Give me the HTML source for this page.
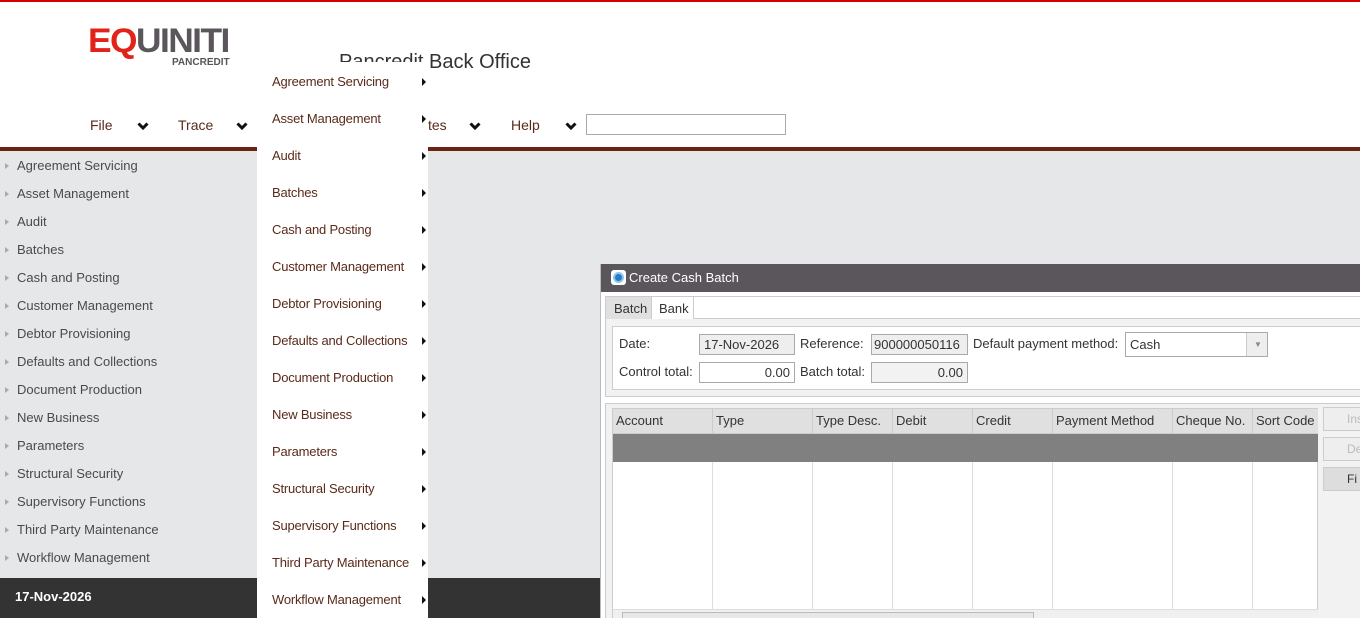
<!DOCTYPE html>
<html><head><style>
*{box-sizing:border-box;margin:0;padding:0}
html,body{width:1360px;height:618px;overflow:hidden}
body{position:relative;background:#e6e7e8;font-family:"Liberation Sans",sans-serif;font-size:13px}
.a{position:absolute}
#top{left:0;top:0;width:1360px;height:147px;background:#fff;border-top:2px solid #d40000}
#bar{left:0;top:147px;width:1360px;height:4px;background:#6b2412}
#side{left:0;top:151px;width:257px;height:427px;background:#e6e7e8}
#side div{position:absolute;left:17px;color:#4a4a4a;font-size:13px}
#side div:before{content:"";position:absolute;left:-12px;top:5px;border-left:4px solid #aaa;border-top:3px solid transparent;border-bottom:3px solid transparent}
#foot{left:0;top:578px;width:600px;height:40px;background:#333;color:#fff;font-weight:bold;padding:11px 15px;font-size:13px}
#menu{left:257px;top:62px;width:171px;height:556px;background:#fff}
#menu div{position:absolute;left:15px;color:#5a2a1a;font-size:13px;width:156px;letter-spacing:-0.2px}
#menu div:after{content:"";position:absolute;right:2px;top:4px;border-left:4px solid #111;border-top:4px solid transparent;border-bottom:4px solid transparent}
.nav{top:117px;color:#5a2a1a;font-size:14px}
.chev{top:122px}
#dlg{left:600px;top:264px;width:760px;height:354px;background:#fff;border-left:1px solid #bbb;overflow:hidden}
#tb{left:0;top:0;width:760px;height:28px;background:#5a565b;color:#fff;font-size:13px;padding:6px 0 0 28px}
.inp{position:absolute;height:21px;border:1px solid #aaa;font-size:13px;padding:2px 4px;color:#333}
.lbl{position:absolute;font-size:13px;color:#333}
.th{position:absolute;top:0;height:25px;border-right:1px solid #ccc;padding:4px 3px;color:#333;font-size:13px}
.col{position:absolute;top:53px;height:160px;border-right:1px solid #ddd}
.btn{position:absolute;left:722px;width:40px;height:24px;background:#eee;border:1px solid #ccc;color:#bbb;padding:4px 0 0 23px;font-size:12px}
</style></head><body>
<div class="a" id="top"></div>
<div class="a" style="left:88px;top:22px;font-size:34px;font-weight:bold;letter-spacing:-1.5px;color:#5a565b;transform:scaleX(1.04);transform-origin:left"><span style="color:#e2231a">EQ</span>UINITI</div>
<div class="a" style="left:172px;top:57px;font-size:10px;color:#555;font-weight:bold">PANCREDIT</div>
<div class="a" style="left:339px;top:51px;font-size:20px;color:#333">Pancredit Back Office</div>
<svg width="0" height="0" style="position:absolute"><defs><symbol id="cv" viewBox="0 0 12 8"><path d="M1.5 1.5 L6 6 L10.5 1.5" fill="none" stroke="#111" stroke-width="3"/></symbol></defs></svg>
<div class="a nav" style="left:90px">File</div><svg class="a chev" style="left:137px" width="12" height="8"><use href="#cv"/></svg>
<div class="a nav" style="left:178px">Trace</div><svg class="a chev" style="left:236px" width="12" height="8"><use href="#cv"/></svg>
<div class="a nav" style="left:428px">tes</div><svg class="a chev" style="left:469px" width="12" height="8"><use href="#cv"/></svg>
<div class="a nav" style="left:511px">Help</div><svg class="a chev" style="left:565px" width="12" height="8"><use href="#cv"/></svg>
<div class="a" style="left:586px;top:114px;width:200px;height:21px;border:1px solid #aaa;background:#fff"></div>
<div class="a" id="bar"></div>
<div class="a" id="side">
<div style="top:7px">Agreement Servicing</div><div style="top:35px">Asset Management</div><div style="top:63px">Audit</div><div style="top:91px">Batches</div><div style="top:119px">Cash and Posting</div><div style="top:147px">Customer Management</div><div style="top:175px">Debtor Provisioning</div><div style="top:203px">Defaults and Collections</div><div style="top:231px">Document Production</div><div style="top:259px">New Business</div><div style="top:287px">Parameters</div><div style="top:315px">Structural Security</div><div style="top:343px">Supervisory Functions</div><div style="top:371px">Third Party Maintenance</div><div style="top:399px">Workflow Management</div>
</div>
<div class="a" id="foot">17-Nov-2026</div>
<div class="a" id="menu">
<div style="top:12px">Agreement Servicing</div><div style="top:49px">Asset Management</div><div style="top:86px">Audit</div><div style="top:123px">Batches</div><div style="top:160px">Cash and Posting</div><div style="top:197px">Customer Management</div><div style="top:234px">Debtor Provisioning</div><div style="top:271px">Defaults and Collections</div><div style="top:308px">Document Production</div><div style="top:345px">New Business</div><div style="top:382px">Parameters</div><div style="top:419px">Structural Security</div><div style="top:456px">Supervisory Functions</div><div style="top:493px">Third Party Maintenance</div><div style="top:530px">Workflow Management</div>
</div>
<div class="a" id="dlg">
<div class="a" id="tb">Create Cash Batch</div>
<div class="a" style="left:10px;top:6px;width:15px;height:15px;border-radius:3px;background:#fff"><div class="a" style="left:2px;top:2px;width:11px;height:11px;border-radius:50%;background:#2a7cc0;border:2px solid #8fc6ee"></div></div>
<div class="a" style="left:4px;top:32px;width:760px;height:101px;border:1px solid #ccc;background:#f2f2f2"></div>
<div class="a" style="left:5px;top:33px;width:46px;height:22px;background:#e0e0e0;border-right:1px solid #ccc;padding:4px 0 0 8px;color:#333">Batch</div>
<div class="a" style="left:51px;top:33px;width:42px;height:22px;background:#fff;border-right:1px solid #ccc;padding:4px 0 0 7px;color:#333">Bank</div>
<div class="a" style="left:93px;top:33px;width:670px;height:22px;background:#fff;border-bottom:1px solid #ccc"></div>
<div class="a" style="left:11px;top:62px;width:760px;height:64px;border:1px solid #ccc;background:#fff"></div>
<span class="lbl" style="left:18px;top:72px">Date:</span>
<div class="inp" style="left:98px;top:70px;width:96px;background:#eee">17-Nov-2026</div>
<span class="lbl" style="left:199px;top:72px">Reference:</span>
<div class="inp" style="left:270px;top:70px;width:97px;background:#eee;padding:2px 2px">900000050116</div>
<span class="lbl" style="left:372px;top:72px">Default payment method:</span>
<div class="inp" style="left:524px;top:68px;width:143px;height:25px;padding-top:4px;background:#fff">Cash<span style="position:absolute;right:0;top:0;width:21px;height:23px;border-left:1px solid #ccc;background:#eee;font-size:8px;color:#888;padding:7px 0 0 7px">▼</span></div>
<span class="lbl" style="left:18px;top:100px">Control total:</span>
<div class="inp" style="left:98px;top:98px;width:96px;text-align:right;background:#fff">0.00</div>
<span class="lbl" style="left:199px;top:100px">Batch total:</span>
<div class="inp" style="left:270px;top:98px;width:97px;text-align:right;background:#f2f2f2">0.00</div>
<div class="a" style="left:4px;top:139px;width:760px;height:220px;border:1px solid #ccc;background:#f2f2f2"></div>
<div class="a" style="left:11px;top:144px;width:706px;height:215px;background:#fff;border:1px solid #ccc">
<div class="a" style="left:0;top:0;width:705px;height:25px;background:#e0e0e0;border-bottom:1px solid #ccc"></div>
<div class="th" style="left:0;width:100px">Account</div><div class="th" style="left:100px;width:100px">Type</div><div class="th" style="left:200px;width:80px">Type Desc.</div><div class="th" style="left:280px;width:80px">Debit</div><div class="th" style="left:360px;width:80px">Credit</div><div class="th" style="left:440px;width:120px">Payment Method</div><div class="th" style="left:560px;width:80px">Cheque No.</div><div class="th" style="left:640px;width:65px;border:0">Sort Code</div>
<div class="a" style="left:0;top:25px;width:705px;height:28px;background:#808080"></div>
<div class="col" style="left:99px;height:147px"></div><div class="col" style="left:199px;height:147px"></div><div class="col" style="left:279px;height:147px"></div><div class="col" style="left:359px;height:147px"></div><div class="col" style="left:439px;height:147px"></div><div class="col" style="left:559px;height:147px"></div><div class="col" style="left:639px;height:147px"></div>
<div class="a" style="left:0;top:200px;width:705px;height:12px;background:#f0f0f0;border-top:1px solid #ddd"><div class="a" style="left:9px;top:2px;width:412px;height:8px;border:1px solid #bbb;background:#e8e8e8"></div></div>
</div>
<div class="btn" style="top:143px">Ins</div>
<div class="btn" style="top:173px">Del</div>
<div class="btn" style="top:203px;color:#333;background:#ddd">Fi</div>
</div>
</body></html>
